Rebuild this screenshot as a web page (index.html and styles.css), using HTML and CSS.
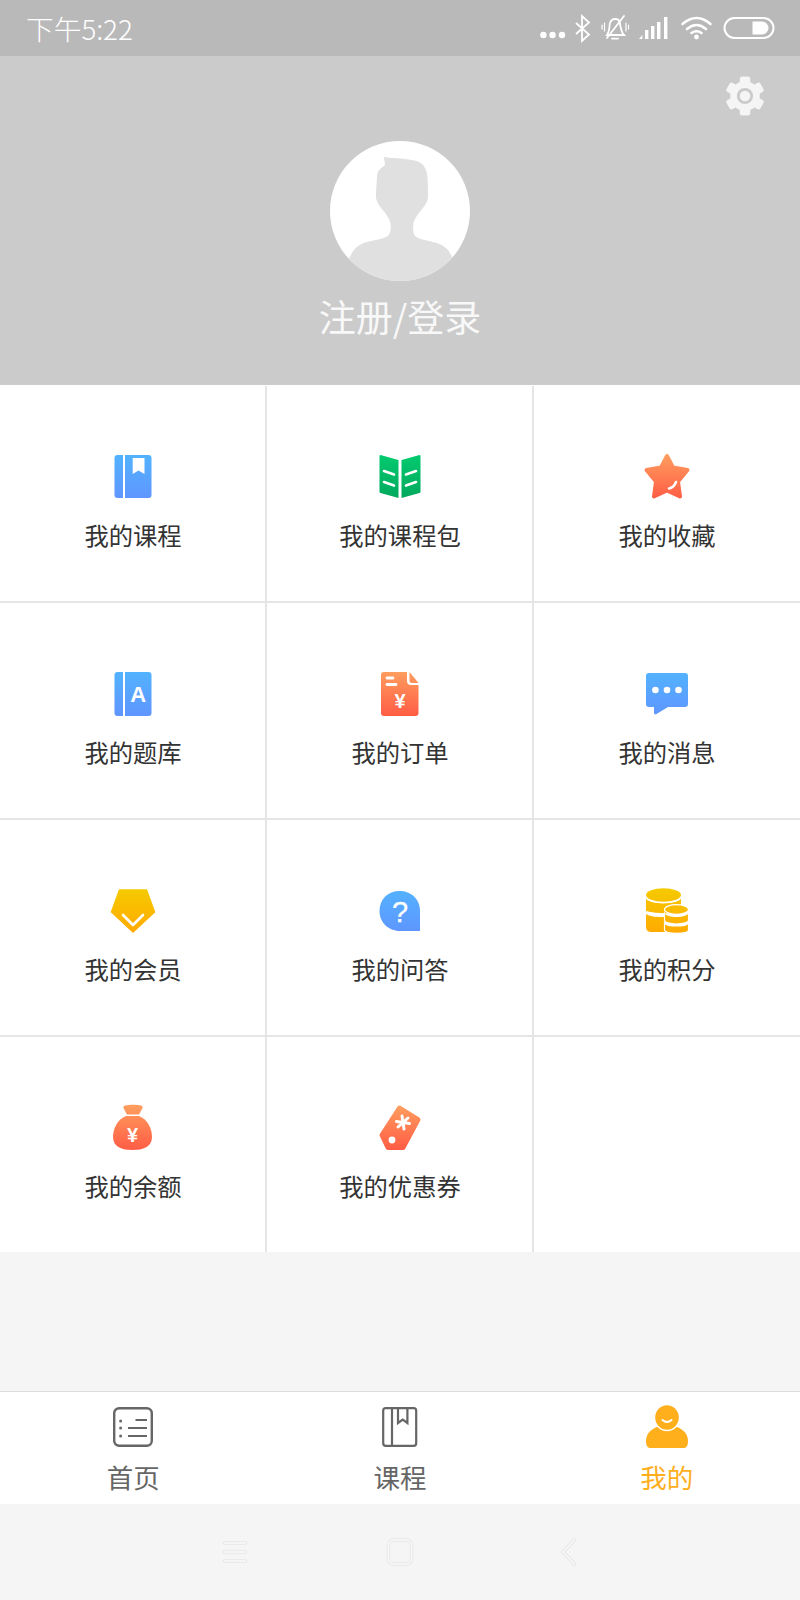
FILE: index.html
```html
<!DOCTYPE html>
<html lang="zh-CN">
<head>
    <meta charset="UTF-8">
    <meta name="viewport" content="width=device-width, initial-scale=1.0">
    <title>我的</title>
    <link rel="stylesheet" href="styles.css">
</head>
<body>

    <!-- shared gradients for the menu icons -->
    <svg class="defs" aria-hidden="true">
        <defs>
            <linearGradient id="blue" gradientUnits="userSpaceOnUse" x1="0" y1="0" x2="0" y2="46"><stop offset="0" stop-color="#52b4ff"/><stop offset="1" stop-color="#5f95ff"/></linearGradient>
            <linearGradient id="green" gradientUnits="userSpaceOnUse" x1="0" y1="0" x2="0" y2="46"><stop offset="0" stop-color="#04cb70"/><stop offset="1" stop-color="#02a85c"/></linearGradient>
            <linearGradient id="orange" gradientUnits="userSpaceOnUse" x1="0" y1="0" x2="0" y2="46"><stop offset="0" stop-color="#ffa05f"/><stop offset="1" stop-color="#ff5c45"/></linearGradient>
            <linearGradient id="yellow" gradientUnits="userSpaceOnUse" x1="0" y1="0" x2="0" y2="46"><stop offset="0" stop-color="#f5cb00"/><stop offset="1" stop-color="#ffaa00"/></linearGradient>
            <clipPath id="avatar-clip"><circle cx="70" cy="70" r="70"/></clipPath>
        </defs>
    </svg>

    <div class="status-bar">
        <span class="status-time">下午5:22</span>
        <svg class="status-icons" width="235" height="56" viewBox="0 0 235 56">
            <g fill="#fff">
                <circle cx="3.4" cy="35" r="3.2"/>
                <circle cx="12.5" cy="35" r="3.2"/>
                <circle cx="22" cy="35" r="3.2"/>
            </g>
            <path d="M36 23 L49 34.5 L42 41 V16 L49 22.5 L36 34" fill="none" stroke="#fff" stroke-width="1.8"/>
            <g fill="none" stroke="#fff" stroke-width="1.8" stroke-linecap="round">
                <path d="M67 35 C70 31 69 27 70 23 C71 20 73 19 75 19 C78 19 80 21 80 24 C81 28 81 32 84 35 Z"/>
                <path d="M72 38.6 H78"/>
                <path d="M67 38 L84 16"/>
                <path d="M64.5 23 V31 M62 25 V29 M86 23 V31 M88.5 25 V29" stroke-width="1.2"/>
            </g>
            <g fill="#fff">
                <path d="M99 39 L102.4 35 V39 Z"/>
                <rect x="105" y="30" width="3.4" height="9"/>
                <rect x="111" y="26" width="3.4" height="13"/>
                <rect x="117" y="22" width="3.4" height="17"/>
                <rect x="124" y="17" width="3.4" height="22"/>
                <circle cx="156.5" cy="37" r="2.4"/>
            </g>
            <g fill="none" stroke="#fff" stroke-width="2.6" stroke-linecap="round">
                <path d="M142.5 24 Q156.5 12 170.5 24"/>
                <path d="M147 29 Q156.5 21 166 29"/>
                <path d="M151.5 33 Q156.5 29.5 161.5 33"/>
            </g>
            <rect x="184.5" y="18" width="49" height="20" rx="10" fill="none" stroke="#fff" stroke-width="2"/>
            <path d="M212.5 21.5 H222 A6.5 6.5 0 0 1 222 34.5 H212.5 Z" fill="#fff"/>
        </svg>
    </div>

    <header class="profile">
        <div class="profile-top">
            <svg width="40" height="40" viewBox="0 0 42 42">
                <g fill="#f5f5f5">
                    <circle cx="21" cy="21" r="15.5"/>
                    <rect x="15.5" y="0.5" width="11" height="41" rx="2.5"/>
                    <rect x="15.5" y="0.5" width="11" height="41" rx="2.5" transform="rotate(60 21 21)"/>
                    <rect x="15.5" y="0.5" width="11" height="41" rx="2.5" transform="rotate(120 21 21)"/>
                </g>
                <circle cx="21" cy="21" r="8.5" fill="#cbcbcb"/>
                <circle cx="21" cy="21" r="5.5" fill="#f5f5f5"/>
            </svg>
        </div>
        <svg class="avatar" width="140" height="140" viewBox="0 0 140 140">
            <circle cx="70" cy="70" r="70" fill="#fff"/>
            <path clip-path="url(#avatar-clip)" fill="#e0e0e0" d="M54 16 C66 18 88 17 93 24 C97 29 98 34 98 51 L98 57 C96 66 89 70 85 78 C82 84 83 92 85 95 C88 98 96 99 103 101 C113 103 119 108 122 116 L140 140 H0 L20 116 C23 108 29 103 37 101 C44 99 53 98 58 95 C61 92 62 84 59 78 C55 70 48 66 46 57 L46 51 L47 36 C47 30 50 28 55 24 Z"/>
        </svg>
        <div class="profile-login">注册/登录</div>
    </header>

    <section class="menu">
        <div class="menu-item">
            <svg class="menu-icon" viewBox="0 0 60 50">
                <path fill="url(#blue)" d="M14.5 2 H20 V45 H14.5 A3 3 0 0 1 11.5 42 V5 A3 3 0 0 1 14.5 2 Z"/>
                <path fill="url(#blue)" fill-rule="evenodd" d="M22 2 H45.5 A3 3 0 0 1 48.5 5 V42 A3 3 0 0 1 45.5 45 H22 Z M29.7 5 V21 L35.5 17.5 L41.5 21 V5 Z"/>
            </svg>
            <div class="menu-label">我的课程</div>
        </div>
        <div class="menu-item">
            <svg class="menu-icon" viewBox="0 0 60 50">
                <path fill="url(#green)" d="M10.5 2 L28.5 7 V45 L10.5 40 A1.5 1.5 0 0 1 9.5 38.5 V3 A1 1 0 0 1 10.5 2 Z"/>
                <path fill="url(#green)" d="M49.5 2 L31.5 7 V45 L49.5 40 A1.5 1.5 0 0 0 50.5 38.5 V3 A1 1 0 0 0 49.5 2 Z"/>
                <path fill="none" stroke="#fff" stroke-width="2.6" stroke-linecap="round" d="M14 18 L24 21.5 M14 29 L24 32.5 M46 18 L36 21.5 M46 29 L36 32.5"/>
            </svg>
            <div class="menu-label">我的课程包</div>
        </div>
        <div class="menu-item">
            <svg class="menu-icon" viewBox="0 0 60 50">
                <path fill="url(#orange)" stroke="url(#orange)" stroke-width="4" stroke-linejoin="round" d="M30 3 L36 14.5 L50.5 17 L41 28.5 L43 43.5 L30 37.5 L17 43.5 L19 28.5 L9.5 17 L24 14.5 Z"/>
                <path fill="none" stroke="#fff" stroke-width="2.6" stroke-linecap="round" d="M39 29 C38 32 35 35 32 35.5"/>
            </svg>
            <div class="menu-label">我的收藏</div>
        </div>
        <div class="menu-item">
            <svg class="menu-icon" viewBox="0 0 60 50">
                <path fill="url(#blue)" d="M14.5 2 H20 V46 H14.5 A3 3 0 0 1 11.5 43 V5 A3 3 0 0 1 14.5 2 Z"/>
                <path fill="url(#blue)" d="M22 2 H45.5 A3 3 0 0 1 48.5 5 V43 A3 3 0 0 1 45.5 46 H22 Z"/>
                <text class="icon-glyph" x="35.2" y="32" font-size="22">A</text>
            </svg>
            <div class="menu-label">我的题库</div>
        </div>
        <div class="menu-item">
            <svg class="menu-icon" viewBox="0 0 60 50">
                <path fill="url(#orange)" d="M14 2 H37 V11 A4 4 0 0 0 41 15 H48.5 V43 A3 3 0 0 1 45.5 46 H14 A3 3 0 0 1 11 43 V5 A3 3 0 0 1 14 2 Z"/>
                <path fill="url(#orange)" d="M39.5 2 L48.5 13 H42 A2.5 2.5 0 0 1 39.5 10.5 Z"/>
                <path fill="none" stroke="#fff" stroke-width="2.8" stroke-linecap="round" d="M17 8 H23 M17 14.5 H26"/>
                <text class="icon-glyph" x="30" y="38" font-size="20">¥</text>
            </svg>
            <div class="menu-label">我的订单</div>
        </div>
        <div class="menu-item">
            <svg class="menu-icon" viewBox="0 0 60 50">
                <path fill="url(#blue)" d="M12 3 H48 A3 3 0 0 1 51 6 V34 A3 3 0 0 1 48 37 H31 L19.5 44 A1.5 1.5 0 0 1 17 43 V37 H12 A3 3 0 0 1 9 34 V6 A3 3 0 0 1 12 3 Z"/>
                <g fill="#fff">
                    <circle cx="18.4" cy="20" r="3.3"/>
                    <circle cx="30" cy="20" r="3.3"/>
                    <circle cx="41.5" cy="20" r="3.3"/>
                </g>
            </svg>
            <div class="menu-label">我的消息</div>
        </div>
        <div class="menu-item">
            <svg class="menu-icon" viewBox="0 0 60 50">
                <path fill="url(#yellow)" stroke="url(#yellow)" stroke-width="1.5" stroke-linejoin="round" d="M16.5 3 H43.5 L51.5 25 L30 45 L8.5 25 Z"/>
                <path fill="none" stroke="#fff" stroke-width="2.6" stroke-linecap="round" stroke-linejoin="round" d="M20 28 L30 38 L40 28"/>
            </svg>
            <div class="menu-label">我的会员</div>
        </div>
        <div class="menu-item">
            <svg class="menu-icon" viewBox="0 0 60 50">
                <path fill="url(#blue)" d="M50 44 H30 C18 44 9.5 35 9.5 24 C9.5 12 18 4 29.5 4 C41 4 50 12 50 24 Z"/>
                <text class="icon-glyph thin" x="30" y="35" font-size="29">?</text>
            </svg>
            <div class="menu-label">我的问答</div>
        </div>
        <div class="menu-item">
            <svg class="menu-icon" viewBox="0 0 60 50">
                <g fill="url(#yellow)">
                    <ellipse cx="26.5" cy="8" rx="17.5" ry="6.8"/>
                    <path d="M9 11.5 C13 18 40 18 44 11.5 V24 C40 27 20 27 9 24 Z"/>
                    <path d="M9 27 C14 30 20 30 28 30 V45 H15 C11 45 9 43 9 40 Z"/>
                </g>
                <g fill="url(#yellow)" stroke="#fff" stroke-width="1.2">
                    <ellipse cx="39.5" cy="22.5" rx="12" ry="4.8"/>
                    <path d="M27.5 26 C31 30.5 48 30.5 51.5 26 V34 C48 38 31 38 27.5 34 Z"/>
                    <path d="M27.5 36 C31 40 48 40 51.5 36 V43 C51.5 47.5 27.5 47.5 27.5 43 Z"/>
                </g>
            </svg>
            <div class="menu-label">我的积分</div>
        </div>
        <div class="menu-item">
            <svg class="menu-icon" viewBox="0 0 60 50">
                <path fill="url(#orange)" d="M22 1.5 C26 0.5 34 0.5 38 1.5 C40 2 40 3.5 39 5 L36 10.5 H24 L21 5 C20 3.5 20 2 22 1.5 Z"/>
                <path fill="url(#orange)" d="M23 12 H36 C44 15 49 24 49 33 C49 43 40 46 29.5 46 C19 46 10 43 10 33 C10 24 15 15 23 12 Z"/>
                <text class="icon-glyph" x="29.5" y="38" font-size="20">¥</text>
            </svg>
            <div class="menu-label">我的余额</div>
        </div>
        <div class="menu-item">
            <svg class="menu-icon" viewBox="0 0 60 50">
                <path fill="url(#orange)" stroke="url(#orange)" stroke-width="5" stroke-linejoin="round" d="M29.5 4 L48 15.5 L33 43.5 H18 L12 31 Z"/>
                <circle cx="22" cy="36" r="3.4" fill="#fff"/>
                <path fill="none" stroke="#fff" stroke-width="3" stroke-linecap="round" d="M32 12 L34 25 M26.5 17.5 L39.5 19.5 M28 23 L38 14"/>
            </svg>
            <div class="menu-label">我的优惠券</div>
        </div>
        <div class="menu-item"></div>
    </section>

    <div class="spacer"></div>

    <nav class="tabbar">
        <div class="tab">
            <svg width="44" height="44" viewBox="0 0 44 44">
                <rect x="3.2" y="3.2" width="37.6" height="37.6" rx="5" fill="none" stroke="#666" stroke-width="2.4"/>
                <path fill="none" stroke="#666" stroke-width="2.2" d="M24.5 15 H36 M17 23 H36 M17 31 H36"/>
                <g fill="#666">
                    <circle cx="9.6" cy="16" r="1.5"/>
                    <circle cx="9.6" cy="23" r="1.5"/>
                    <circle cx="9.6" cy="31" r="1.5"/>
                </g>
            </svg>
            <div class="tab-label">首页</div>
        </div>
        <div class="tab">
            <svg width="44" height="44" viewBox="0 0 44 44">
                <rect x="5.2" y="3.2" width="33" height="37.6" rx="2.5" fill="none" stroke="#666" stroke-width="2.2"/>
                <path fill="none" stroke="#666" stroke-width="2.2" d="M14 3 V41 M20 3 V18 L24.7 14.5 L29.4 18 V3"/>
            </svg>
            <div class="tab-label">课程</div>
        </div>
        <div class="tab active">
            <svg width="44" height="44" viewBox="0 0 44 44">
                <path fill="#ffae1c" d="M1 36 C1 28 7 24 12 22 H32 C37 24 43 28 43 36 C43 41 41 43 39 43 H5 C3 43 1 41 1 36 Z"/>
                <ellipse cx="22" cy="12.5" rx="12.5" ry="13" fill="#ffae1c" stroke="#fff" stroke-width="1.4"/>
                <path fill="none" stroke="#fff" stroke-width="2" stroke-linecap="round" d="M17.5 15 Q22 19 26.5 15"/>
            </svg>
            <div class="tab-label">我的</div>
        </div>
    </nav>

    <div class="nav-bar">
        <svg width="400" height="96" viewBox="0 0 400 96">
            <g fill="none" stroke="#e6e6e6" stroke-width="3.4" stroke-linecap="round" stroke-linejoin="round">
                <path d="M26.5 39 H47.5 M26.5 48 H47.5 M26.5 57 H47.5"/>
                <rect x="190.5" y="36" width="23" height="24" rx="5"/>
                <path d="M376.5 36 L365 48 L376.5 60"/>
            </g>
            <g fill="none" stroke="#fafafa" stroke-width="1.4" stroke-linecap="round" stroke-linejoin="round">
                <path d="M26.5 39 H47.5 M26.5 48 H47.5 M26.5 57 H47.5"/>
                <rect x="190.5" y="36" width="23" height="24" rx="5"/>
                <path d="M376.5 36 L365 48 L376.5 60"/>
            </g>
        </svg>
    </div>

</body>
</html>
```

FILE: styles.css
```css
* {
    box-sizing: border-box;
}

body {
    font-family: "Noto Sans CJK SC", "Noto Sans", sans-serif;
    margin: 0;
    padding: 0;
    width: 800px;
    height: 1600px;
    display: flex;
    flex-direction: column;
    background-color: #f5f5f5;
    overflow: hidden;
}

.defs {
    width: 0;
    height: 0;
    flex: none;
}

.status-bar {
    height: 56px;
    flex: none;
    display: flex;
    align-items: center;
    justify-content: space-between;
    padding: 0 25px 0 26px;
    background-color: #b9b9b9;
    color: #fff;
}

.status-time {
    font-size: 27.7px;
    font-weight: 300;
}

.status-icons {
    display: block;
}

.profile {
    height: 329px;
    flex: none;
    display: flex;
    flex-direction: column;
    align-items: center;
    background-color: #cbcbcb;
}

.profile-top {
    width: 100%;
    height: 85px;
    padding: 20px 35px 0 0;
    display: flex;
    justify-content: flex-end;
    align-items: flex-start;
}

.avatar {
    display: block;
}

.profile-login {
    margin-top: 11px;
    font-size: 37px;
    line-height: 48px;
    color: #f8f8f8;
}

.menu {
    flex: none;
    display: grid;
    grid-template-columns: 267px 267px 266px;
    grid-template-rows: repeat(3, 217px) 215px;
    padding-top: 1px;
    background-color: #fff;
}

.menu-item {
    display: flex;
    flex-direction: column;
    align-items: center;
    padding-top: 67px;
    padding-left: 1px;
    border-right: 2px solid #e5e5e5;
    border-bottom: 2px solid #e5e5e5;
}

.menu-item:nth-child(3n) {
    padding-left: 0;
    border-right: none;
}

.menu-item:nth-last-child(-n+3) {
    border-bottom: none;
}

.menu-icon {
    width: 60px;
    height: 50px;
    display: block;
}

.icon-glyph {
    font-family: "Liberation Sans", sans-serif;
    font-weight: bold;
    fill: #fff;
    text-anchor: middle;
}

.icon-glyph.thin {
    font-weight: normal;
    stroke: #fff;
    stroke-width: 0.3;
}

.menu-label {
    margin-top: 15px;
    font-size: 24.3px;
    line-height: 34px;
    color: #333;
}

.spacer {
    flex: 1;
}

.tabbar {
    height: 113px;
    flex: none;
    display: grid;
    grid-template-columns: repeat(3, 1fr);
    padding-top: 13px;
    border-top: 1px solid #dcdcdc;
    background-color: #fff;
}

.tab {
    display: flex;
    flex-direction: column;
    align-items: center;
    color: #666;
}

.tab svg {
    display: block;
}

.tab-label {
    margin-top: 12px;
    font-size: 26.5px;
    line-height: 32px;
}

.tab.active {
    color: #ffae1c;
}

.nav-bar {
    height: 96px;
    flex: none;
    padding-left: 198px;
}

.nav-bar svg {
    display: block;
}
```
